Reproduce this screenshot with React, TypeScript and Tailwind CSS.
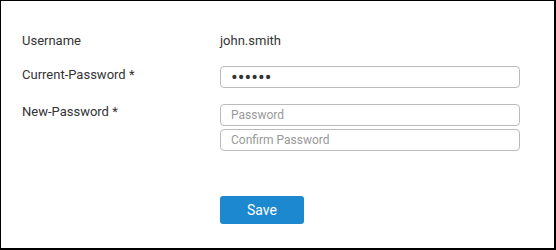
import React from "react";

export default function App() {
  return (
    <div className="w-[556px] h-[250px] bg-white border-l border-t border-r-2 border-b-2 border-black font-['Roboto',sans-serif] text-[13px] text-[#333] pl-[21px] pt-[29px] box-border">
      <div className="flex flex-col">
        <div className="flex h-[22px] items-center">
          <div className="w-[198px] leading-[16px]">Username</div>
          <div className="leading-[16px]">john.smith</div>
        </div>
        <div className="flex mt-[14px]">
          <div className="w-[198px] leading-[16px] pt-[1px]">Current-Password *</div>
          <input
            type="password"
            defaultValue="123456"
            readOnly
            className="w-[300px] h-[22px] border border-[#bbb] rounded-[4px] px-[10px] text-[20px] leading-[20px] text-[#333] outline-none font-['Roboto',sans-serif]"
          />
        </div>
        <div className="flex mt-[16px]">
          <div className="w-[198px] leading-[16px]">New-Password *</div>
          <div className="flex flex-col gap-[3px]">
            <input
              type="password"
              placeholder="Password"
              className="w-[300px] h-[22px] border border-[#bbb] rounded-[4px] px-[10px] text-[12px] text-[#333] placeholder:text-[#999] outline-none font-['Roboto',sans-serif]"
            />
            <input
              type="password"
              placeholder="Confirm Password"
              className="w-[300px] h-[22px] border border-[#bbb] rounded-[4px] px-[10px] text-[12px] text-[#333] placeholder:text-[#999] outline-none font-['Roboto',sans-serif]"
            />
          </div>
        </div>
        <div className="flex mt-[45px]">
          <div className="w-[198px]" />
          <button className="w-[84px] h-[28px] bg-[#1b88cf] rounded-[3px] text-white text-[14px] leading-none font-['Roboto',sans-serif]">
            Save
          </button>
        </div>
      </div>
    </div>
  );
}
